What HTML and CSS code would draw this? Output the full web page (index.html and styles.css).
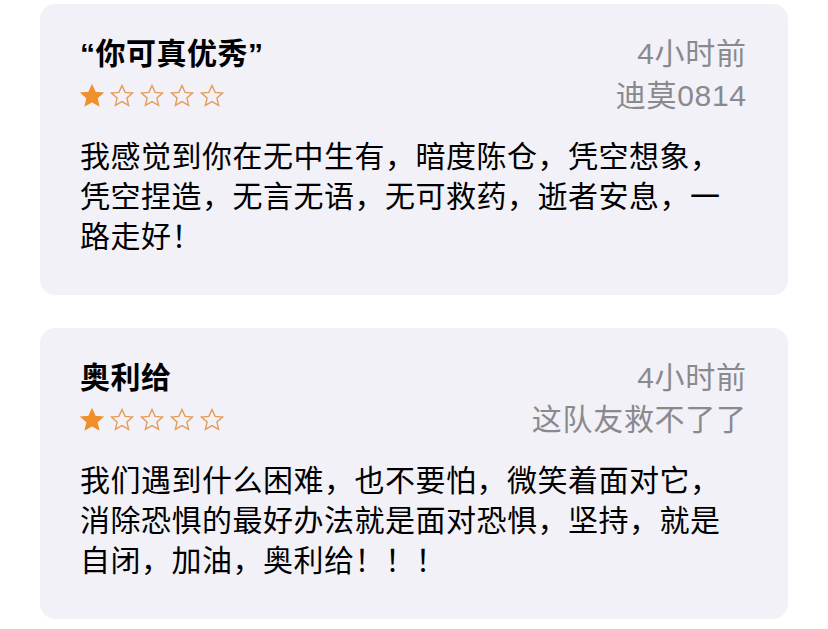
FILE: index.html
```html
<!DOCTYPE html>
<html lang="zh-CN">
<head>
<meta charset="utf-8">
<link rel="stylesheet" href="styles.css">
</head>
<body>
<div class="list">
  <div class="card">
    <div class="head">
      <div class="left">
        <div class="title">“你可真优秀”</div>
        <div class="stars">
          <svg class="star on" viewBox="0 0 24 24"><path d="M12 1.5l3.1 6.9 7.4.7-5.6 5 1.7 7.3L12 17.6l-6.6 3.8 1.7-7.3-5.6-5 7.4-.7z"/></svg>
          <svg class="star" viewBox="0 0 24 24"><path d="M12 1.5l3.1 6.9 7.4.7-5.6 5 1.7 7.3L12 17.6l-6.6 3.8 1.7-7.3-5.6-5 7.4-.7z"/></svg>
          <svg class="star" viewBox="0 0 24 24"><path d="M12 1.5l3.1 6.9 7.4.7-5.6 5 1.7 7.3L12 17.6l-6.6 3.8 1.7-7.3-5.6-5 7.4-.7z"/></svg>
          <svg class="star" viewBox="0 0 24 24"><path d="M12 1.5l3.1 6.9 7.4.7-5.6 5 1.7 7.3L12 17.6l-6.6 3.8 1.7-7.3-5.6-5 7.4-.7z"/></svg>
          <svg class="star" viewBox="0 0 24 24"><path d="M12 1.5l3.1 6.9 7.4.7-5.6 5 1.7 7.3L12 17.6l-6.6 3.8 1.7-7.3-5.6-5 7.4-.7z"/></svg>
        </div>
      </div>
      <div class="right">
        <div class="time">4小时前</div>
        <div class="author">迪莫0814</div>
      </div>
    </div>
    <p class="body">我感觉到你在无中生有，暗度陈仓，凭空想象，凭空捏造，无言无语，无可救药，逝者安息，一路走好！</p>
  </div>
  <div class="card">
    <div class="head">
      <div class="left">
        <div class="title">奥利给</div>
        <div class="stars">
          <svg class="star on" viewBox="0 0 24 24"><path d="M12 1.5l3.1 6.9 7.4.7-5.6 5 1.7 7.3L12 17.6l-6.6 3.8 1.7-7.3-5.6-5 7.4-.7z"/></svg>
          <svg class="star" viewBox="0 0 24 24"><path d="M12 1.5l3.1 6.9 7.4.7-5.6 5 1.7 7.3L12 17.6l-6.6 3.8 1.7-7.3-5.6-5 7.4-.7z"/></svg>
          <svg class="star" viewBox="0 0 24 24"><path d="M12 1.5l3.1 6.9 7.4.7-5.6 5 1.7 7.3L12 17.6l-6.6 3.8 1.7-7.3-5.6-5 7.4-.7z"/></svg>
          <svg class="star" viewBox="0 0 24 24"><path d="M12 1.5l3.1 6.9 7.4.7-5.6 5 1.7 7.3L12 17.6l-6.6 3.8 1.7-7.3-5.6-5 7.4-.7z"/></svg>
          <svg class="star" viewBox="0 0 24 24"><path d="M12 1.5l3.1 6.9 7.4.7-5.6 5 1.7 7.3L12 17.6l-6.6 3.8 1.7-7.3-5.6-5 7.4-.7z"/></svg>
        </div>
      </div>
      <div class="right">
        <div class="time">4小时前</div>
        <div class="author">这队友救不了了</div>
      </div>
    </div>
    <p class="body">我们遇到什么困难，也不要怕，微笑着面对它，消除恐惧的最好办法就是面对恐惧，坚持，就是自闭，加油，奥利给！！！</p>
  </div>
</div>
</body>
</html>
```

FILE: styles.css
```css
html, body {
  margin: 0;
  padding: 0;
  background: #ffffff;
}

body {
  font-family: "Liberation Sans", "Noto Sans CJK SC", sans-serif;
  color: #000000;
}

.list {
  display: flex;
  flex-direction: column;
  gap: 33px;
  padding: 4px 40px 0 40px;
  width: 748px;
}

.card {
  background: #f2f1f7;
  border-radius: 15px;
  padding: 28px 42px 38px 40px;
  height: 291px;
  box-sizing: border-box;
}

.head {
  display: flex;
  justify-content: space-between;
}

.left, .right {
  display: flex;
  flex-direction: column;
}

.right {
  align-items: flex-end;
}

.title {
  font-size: 30px;
  font-weight: 600;
  line-height: 44px;
  height: 44px;
  letter-spacing: 0.5px;
}

.stars {
  display: flex;
  align-items: center;
  gap: 6px;
  height: 40px;
}

.star {
  width: 24px;
  height: 24px;
  display: block;
}

.star path {
  fill: none;
  stroke: #e39d5a;
  stroke-width: 1.4;
  stroke-linejoin: miter;
}

.star.on path {
  fill: #f0902a;
  stroke: #f0902a;
}

.time, .author {
  font-size: 30px;
  color: #8a898e;
  white-space: nowrap;
  letter-spacing: 0.7px;
  margin-right: -0.7px;
}

.time {
  line-height: 44px;
  height: 44px;
}

.author {
  line-height: 40px;
  height: 40px;
}

.body {
  margin: 21px 0 0 0;
  font-size: 30px;
  letter-spacing: 0.5px;
  line-height: 40px;
  color: #000000;
}
```
